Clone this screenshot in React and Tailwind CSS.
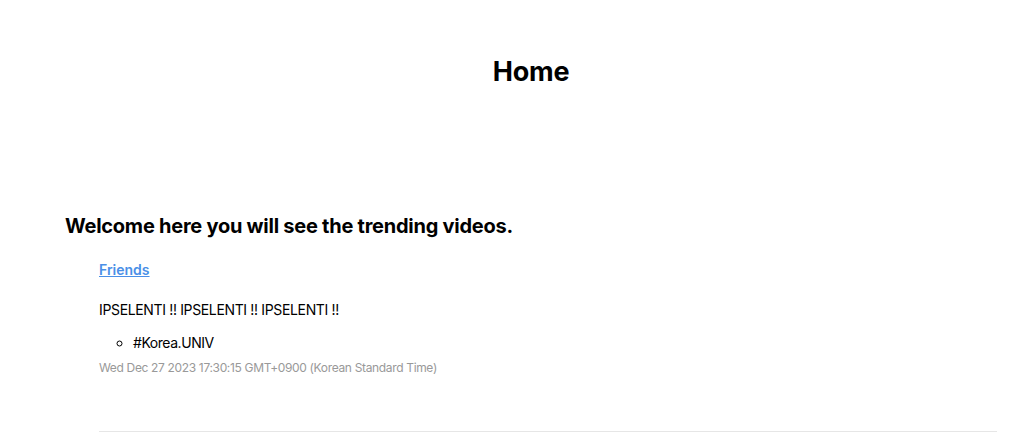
export default function App() {
  return (
    <div className="min-h-[443px] bg-white font-['Inter',sans-serif] text-black">
      <div className="ml-[65px] mr-[27px]">
        <h1 className="pt-[56px] text-center text-[27px] font-bold leading-[32px] tracking-[-0.2px]">Home</h1>
        <h2 className="mt-[124px] text-[20px] font-bold leading-[28px] tracking-[-0.25px]">
          Welcome here you will see the trending videos.
        </h2>
        <div className="ml-[34px] mt-[17px]">
          <a href="#" className="text-[14px] font-semibold leading-[20px] text-[#4a8fe7] underline">
            Friends
          </a>
          <p className="mt-[19px] text-[14px] leading-[20px] tracking-[-0.35px]">
            IPSELENTI !! IPSELENTI !! IPSELENTI !!
          </p>
          <ul className="mt-[13px] list-[circle] pl-[34px] text-[14px] leading-[20px] tracking-[-0.45px]">
            <li>#Korea.UNIV</li>
          </ul>
          <div className="mt-[7px] text-[12px] leading-[16px] tracking-[-0.34px] text-[#999999]">
            Wed Dec 27 2023 17:30:15 GMT+0900 (Korean Standard Time)
          </div>
          <div className="mt-[55px] border-t border-[#e6e6e6]" />
        </div>
      </div>
    </div>
  );
}
